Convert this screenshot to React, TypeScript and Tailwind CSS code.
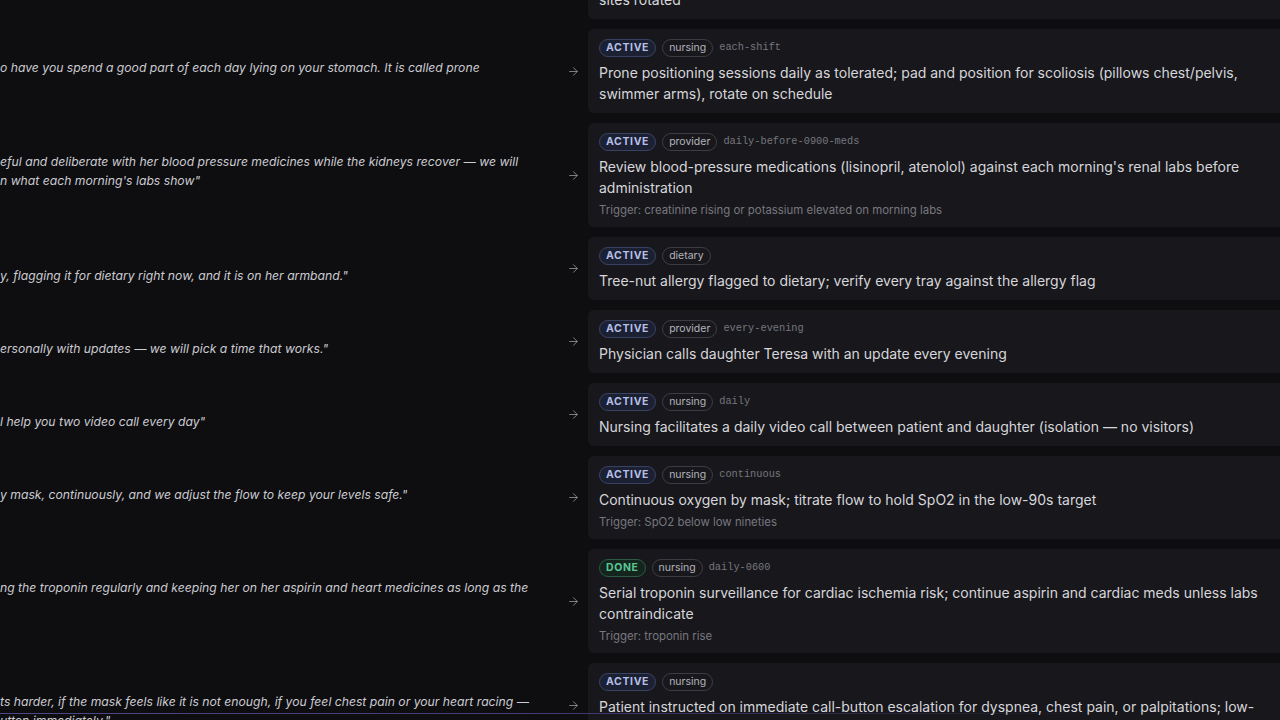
import React from "react";

type Row = {
  status: "ACTIVE" | "DONE";
  team: string;
  cadence?: string;
  lines: string[];
  trigger?: string;
  quote: string[];
};

const rows: Row[] = [
  {
    status: "ACTIVE",
    team: "nursing",
    cadence: "every-2h",
    lines: [
      "Reposition every two hours; inspect skin over pressure points, keep IV and line",
      "sites rotated",
    ],
    quote: [],
  },
  {
    status: "ACTIVE",
    team: "nursing",
    cadence: "each-shift",
    lines: [
      "Prone positioning sessions daily as tolerated; pad and position for scoliosis (pillows chest/pelvis,",
      "swimmer arms), rotate on schedule",
    ],
    quote: [
      "o have you spend a good part of each day lying on your stomach. It is called prone",
    ],
  },
  {
    status: "ACTIVE",
    team: "provider",
    cadence: "daily-before-0900-meds",
    lines: [
      "Review blood-pressure medications (lisinopril, atenolol) against each morning's renal labs before",
      "administration",
    ],
    trigger: "Trigger: creatinine rising or potassium elevated on morning labs",
    quote: [
      "eful and deliberate with her blood pressure medicines while the kidneys recover \u2014 we will",
      "n what each morning's labs show\"",
    ],
  },
  {
    status: "ACTIVE",
    team: "dietary",
    lines: ["Tree-nut allergy flagged to dietary; verify every tray against the allergy flag"],
    quote: ["y, flagging it for dietary right now, and it is on her armband.\""],
  },
  {
    status: "ACTIVE",
    team: "provider",
    cadence: "every-evening",
    lines: ["Physician calls daughter Teresa with an update every evening"],
    quote: ["ersonally with updates \u2014 we will pick a time that works.\""],
  },
  {
    status: "ACTIVE",
    team: "nursing",
    cadence: "daily",
    lines: [
      "Nursing facilitates a daily video call between patient and daughter (isolation \u2014 no visitors)",
    ],
    quote: ["l help you two video call every day\""],
  },
  {
    status: "ACTIVE",
    team: "nursing",
    cadence: "continuous",
    lines: ["Continuous oxygen by mask; titrate flow to hold SpO2 in the low-90s target"],
    trigger: "Trigger: SpO2 below low nineties",
    quote: ["y mask, continuously, and we adjust the flow to keep your levels safe.\""],
  },
  {
    status: "DONE",
    team: "nursing",
    cadence: "daily-0600",
    lines: [
      "Serial troponin surveillance for cardiac ischemia risk; continue aspirin and cardiac meds unless labs",
      "contraindicate",
    ],
    trigger: "Trigger: troponin rise",
    quote: [
      "ng the troponin regularly and keeping her on her aspirin and heart medicines as long as the",
    ],
  },
  {
    status: "ACTIVE",
    team: "nursing",
    lines: [
      "Patient instructed on immediate call-button escalation for dyspnea, chest pain, or palpitations; low-",
      "threshold to escalate oxygen support",
    ],
    quote: [
      "ts harder, if the mask feels like it is not enough, if you feel chest pain or your heart racing \u2014",
      "utton immediately.\"",
    ],
  },
];

function StatusBadge({ status }: { status: Row["status"] }) {
  if (status === "DONE") {
    return (
      <span className="inline-flex h-[18px] items-center rounded-full border border-[#2c5a44] bg-[#13251c] px-[6px] text-[10.5px] font-bold tracking-[0.06em] text-[#5cc597]">
        DONE
      </span>
    );
  }
  return (
    <span className="inline-flex h-[18px] items-center rounded-full border border-[#3a4263] bg-[#1c2033] px-[6px] text-[10.5px] font-bold tracking-[0.06em] text-[#b4bfe6]">
      ACTIVE
    </span>
  );
}

function Arrow() {
  return (
    <svg width="13" height="13" viewBox="0 0 24 24" fill="none" stroke="#8e8e96" strokeWidth="1.6" strokeLinecap="round" strokeLinejoin="round">
      <path d="M5 12h14" />
      <path d="m12 5 7 7-7 7" />
    </svg>
  );
}

export default function App() {
  return (
    <div
      className="relative h-[720px] w-[1280px] overflow-hidden bg-[#0e0e11]"
      style={{ fontFamily: "Inter, 'Noto Sans', sans-serif" }}
    >
      <div className="mt-[-65px] flex flex-col gap-[10px]">
        {rows.map((r, i) => (
          <div key={i} className="flex items-stretch">
            <div className="w-[548px] shrink-0 pt-[29px] text-[12.2px] italic leading-[19px] text-[#cbcbd0]">
              {r.quote.map((q, j) => (
                <div key={j} className="whitespace-nowrap">
                  {q}
                </div>
              ))}
            </div>
            <div className="flex w-[40px] shrink-0 items-center justify-end pr-[8px]">
              <Arrow />
            </div>
            <div className="w-[720px] shrink-0 rounded-[6px] bg-[#18181c] pb-[9px] pl-[11px] pr-[11px] pt-[10px]">
              <div className="mb-[5px] flex h-[18px] items-center gap-[6px]">
                <StatusBadge status={r.status} />
                <span className="inline-flex h-[18px] items-center rounded-full border border-[#3c3c44] px-[6px] text-[10.5px] text-[#b3b3bb]">
                  {r.team}
                </span>
                {r.cadence && (
                  <span
                    className="text-[10.3px] text-[#76767e]"
                    style={{ fontFamily: "'Liberation Mono', 'DejaVu Sans Mono', monospace" }}
                  >
                    {r.cadence}
                  </span>
                )}
              </div>
              <div className="text-[14px] leading-[21px] text-[#d6d6db]">
                {r.lines.map((l, j) => (
                  <div key={j} className="whitespace-nowrap">
                    {l}
                  </div>
                ))}
              </div>
              {r.trigger && (
                <div className="mt-[4px] text-[11.4px] leading-[16px] text-[#77777f]">{r.trigger}</div>
              )}
            </div>
          </div>
        ))}
      </div>
      <div className="absolute left-0 top-[713px] h-px w-[1100px] bg-gradient-to-r from-[#4a4784] via-[#3f3c78] to-transparent" />
    </div>
  );
}
